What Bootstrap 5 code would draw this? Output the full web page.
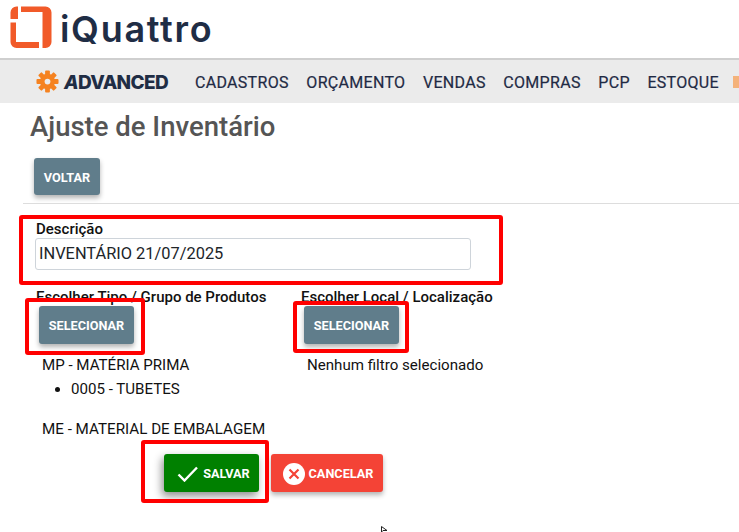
<!DOCTYPE html>
<html lang="pt-BR">
<head>
    <meta charset="UTF-8">
    <title>Ajuste de Inventário</title>
    <link href="https://cdn.jsdelivr.net/npm/bootstrap@5.3.0/dist/css/bootstrap.min.css" rel="stylesheet">
    <style>
        html, body { height: 532px; overflow: hidden; }
        body { font-family: Roboto, "Liberation Sans", sans-serif; font-size: 15px; color: #111; position: relative; background: #fff; }
        .top-brand { height: 58px; padding: 6px 0 0 10px; gap: 8px; }
        .brand-word { font-family: Inter, "Liberation Sans", sans-serif; font-weight: 600; font-size: 36px; line-height: 46px; color: #1f2d45; letter-spacing: 1.7px; }
        .main-menu { height: 45px; background: #ebebeb; border-top: 2px solid #cfcfcf; padding-left: 36px; white-space: nowrap; overflow: hidden; }
        .adv-word { font-family: Inter, "Liberation Sans", sans-serif; font-weight: 800; font-size: 19px; letter-spacing: -.65px; color: #1f2d45; margin-left: 5px; margin-right: 25px; padding-top: 3px; width: 106px; flex: none; }
        .adv-word i { font-style: italic; }
        .menu-link { font-size: 16px; font-weight: 400; color: #1f2a44; letter-spacing: .3px; margin-right: 17.6px; text-decoration: none; padding-top: 2px; -webkit-text-stroke: .2px #1f2a44; }
        .menu-cut { width: 6px; height: 12px; background: #f4b27a; flex: none; margin-left: -4px; }
        .page-title { font-size: 27.5px; font-weight: 500; color: #555; line-height: 34px; margin: 7px 0 0 30px; }
        .flat-btn { font-family: Roboto, sans-serif; font-size: 12.7px; font-weight: 700; color: #fff; border: 0; border-radius: 3px; text-transform: uppercase; box-shadow: 0 3px 5px rgba(0,0,0,.3); padding: 2px 0 0; height: 37px; }
        .btn-slate { background: #607d8b; width: 95px; }
        .btn-back { width: 66px; margin: 14px 0 0 34px; display: block; }
        .line-rule { height: 1px; background: #ddd; margin: 8px 0 0 23px; }
        .field-wrap { margin: 17px 0 0 35px; width: 436px; }
        .field-label { font-size: 15px; font-weight: 500; color: #111; line-height: 17px; margin: 0 0 0 1px; display: block; }
        .text-field { height: 32px; border: 1px solid #ced4da; border-radius: 3px; padding: 0 3px 2px; font-size: 16.4px; color: #212529; font-family: Roboto, sans-serif; box-shadow: none; }
        .pick-row { margin: 19px 0 0 36px; }
        .pick-col-a { width: 265px; }
        .pick-col-b { width: 200px; }
        .pick-col-a .field-label, .pick-col-b .field-label { margin-left: 0; white-space: nowrap; }
        .pick-col-a .flat-btn, .pick-col-b .flat-btn { margin: 0 0 0 3px; display: block; height: 38px; }
        .pick-text { line-height: 18px; margin: 12px 0 0 6px; color: #111; font-size: 15.1px; }
        .pick-list { margin: 6px 0 0 6px; padding-left: 29px; line-height: 18px; font-size: 15.1px; }
        .pick-after { margin: 22px 0 0 6px; line-height: 18px; font-size: 15.2px; white-space: nowrap; }
        .actions-row { margin: 16px 0 0 164px; gap: 12px; }
        .btn-save { background: #008000; width: 95px; height: 38px; padding-left: 4px; box-shadow: -2px 4px 8px rgba(0,0,0,.45); }
        .btn-cancel { background: #f44336; width: 112px; height: 38px; padding-left: 2px; }
        .red-box { position: absolute; border: 4px solid #f00; border-radius: 3px; pointer-events: none; }
        .box-desc { left: 19px; top: 215px; width: 484px; height: 70px; }
        .box-tipo { left: 25px; top: 298px; width: 120px; height: 57px; }
        .box-local { left: 293px; top: 301px; width: 116px; height: 52px; }
        .box-save { left: 141px; top: 440px; width: 128px; height: 63px; }
        .mouse-mark { position: absolute; left: 381px; top: 526px; }
    </style>
</head>
<body>
<div class="top-brand d-flex align-items-start">
    <svg width="42" height="43" viewBox="0 0 42 43" class="flex-shrink-0">
        <path d="M6 16.5H0.5V36a6 6 0 0 0 6 6H29V36H6Z" fill="#f15a29"/>
        <path d="M11 0.5H35.5a6 6 0 0 1 6 6V36a6 6 0 0 1-6 6H32.5V6H11Z" fill="#f15a29"/>
        <path d="M0.5 13V6.5a6 6 0 0 1 6-6H8V13Z" fill="#f15a29"/>
    </svg>
    <span class="brand-word">iQuattro</span>
</div>
<nav class="main-menu d-flex align-items-center">
    <svg width="23" height="23" viewBox="0 0 24 24" class="flex-shrink-0">
        <g fill="#f58220">
            <rect x="9.5" y="0.5" width="5" height="23" rx="1"/>
            <rect x="9.5" y="0.5" width="5" height="23" rx="1" transform="rotate(45 12 12)"/>
            <rect x="9.5" y="0.5" width="5" height="23" rx="1" transform="rotate(90 12 12)"/>
            <rect x="9.5" y="0.5" width="5" height="23" rx="1" transform="rotate(135 12 12)"/>
            <circle cx="12" cy="12" r="8"/>
        </g>
        <circle cx="12" cy="12" r="3" fill="#ebebeb"/>
    </svg>
    <span class="adv-word"><i>A</i>DVANCED</span>
    <a class="menu-link" href="#">CADASTROS</a>
    <a class="menu-link" href="#">ORÇAMENTO</a>
    <a class="menu-link" href="#">VENDAS</a>
    <a class="menu-link" href="#">COMPRAS</a>
    <a class="menu-link" href="#">PCP</a>
    <a class="menu-link" href="#">ESTOQUE</a>
    <span class="menu-cut"></span>
</nav>
<h1 class="page-title">Ajuste de Inventário</h1>
<button class="flat-btn btn-slate btn-back" type="button">Voltar</button>
<div class="line-rule"></div>
<div class="field-wrap">
    <label class="field-label" for="descricao">Descrição</label>
    <input id="descricao" class="form-control text-field" type="text" value="INVENTÁRIO 21/07/2025">
</div>
<div class="pick-row d-flex">
    <div class="pick-col-a">
        <label class="field-label">Escolher Tipo / Grupo de Produtos</label>
        <button class="flat-btn btn-slate" type="button">Selecionar</button>
        <div class="pick-text">MP - MATÉRIA PRIMA</div>
        <ul class="pick-list"><li>0005 - TUBETES</li></ul>
        <div class="pick-after">ME - MATERIAL DE EMBALAGEM</div>
    </div>
    <div class="pick-col-b">
        <label class="field-label">Escolher Local / Localização</label>
        <button class="flat-btn btn-slate" type="button">Selecionar</button>
        <div class="pick-text">Nenhum filtro selecionado</div>
    </div>
</div>
<div class="actions-row d-flex">
    <button class="flat-btn btn-save d-flex align-items-center justify-content-center gap-1" type="button">
        <svg width="22" height="16" viewBox="0 0 22 16"><path d="M1.5 8.5L7.5 14.5L20 1.5" fill="none" stroke="#fff" stroke-width="2.4"/></svg>
        Salvar
    </button>
    <button class="flat-btn btn-cancel d-flex align-items-center justify-content-center gap-1" type="button">
        <svg width="22" height="22" viewBox="0 0 22 22"><circle cx="11" cy="11" r="11" fill="#fff"/><path d="M6.5 6.5L15.5 15.5M15.5 6.5L6.5 15.5" stroke="#f44336" stroke-width="2.2"/></svg>
        Cancelar
    </button>
</div>
<div class="red-box box-desc"></div>
<div class="red-box box-tipo"></div>
<div class="red-box box-local"></div>
<div class="red-box box-save"></div>
<svg class="mouse-mark" width="7" height="6" viewBox="0 0 7 6"><path d="M0.5 0.5V6L2 4.5H6Z" fill="#fff" stroke="#222" stroke-width="1"/></svg>
</body>
</html>
